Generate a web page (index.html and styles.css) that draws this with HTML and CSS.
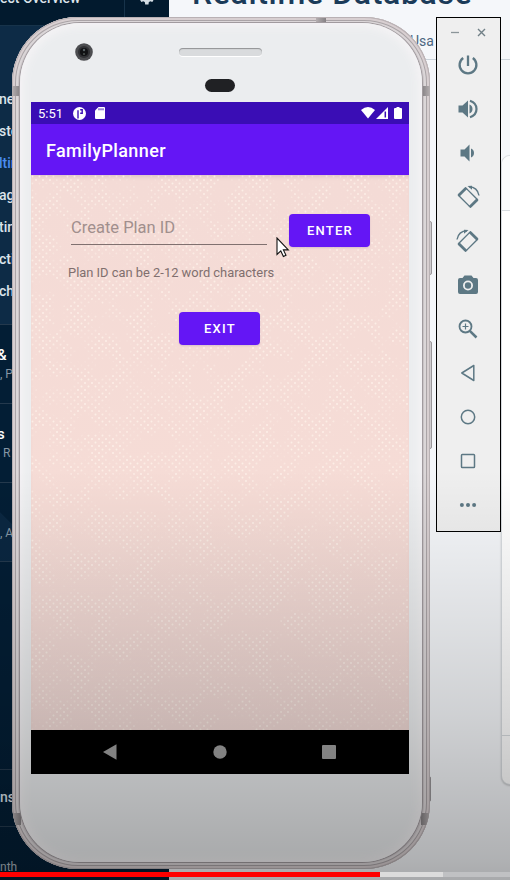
FILE: index.html
```html
<!DOCTYPE html>
<html lang="en">
<head>
<meta charset="utf-8">
<title>FamilyPlanner</title>
<link rel="stylesheet" href="styles.css">
</head>
<body>
<div class="desktop">
  <div class="console">
    <aside class="sidebar">
      <header class="side-head"><span class="side-title">ect Overview</span>
        <span class="gear"><svg width="20" height="20" viewBox="0 0 24 24"><path fill="#d5dde4" fill-rule="evenodd" d="M19.4 13a7.500 7.500 0 0 0 0-2l2.100-1.600-2-3.500-2.500 1a7 7 0 0 0-1.700-1L15 3h-4l-.4 2.900a7 7 0 0 0-1.700 1l-2.500-1-2 3.500L6.500 11a7.500 7.500 0 0 0 0 2l-2.100 1.600 2 3.500 2.500-1a7 7 0 0 0 1.700 1L11 21h4l.4-2.900a7 7 0 0 0 1.700-1l2.500 1 2-3.500zM13 15.500a3.500 3.500 0 1 1 0-7 3.500 3.500 0 0 1 0 7z"/></svg></span>
      </header>
      <nav class="side-nav">
        <span>ne</span><span>ste</span><span class="current">ltin</span><span>ag</span><span>tin</span><span>cti</span><span>chi</span>
      </nav>
      <section class="side-group"><b>&amp;</b><small>, P</small></section>
      <section class="side-group"><b>s</b><small>&nbsp;R</small></section>
      <section class="side-group last"><small>, A</small></section>
      <div class="side-space"></div>
      <section class="side-ext">ns</section>
      <section class="side-plan">nth</section>
    </aside>
    <main class="content">
      <h1>Realtime Database</h1>
      <div class="tabs">Usa</div>
      <div class="card"><div class="card-head"></div><div class="card-body"></div><div class="card-foot"></div></div>
    </main>
  </div>

  <div class="phone">
    <i class="key power"></i><i class="key volume"></i><i class="key lower"></i>
    <div class="ring">
      <i class="band b1"></i><i class="band b2"></i><i class="band b3"></i><i class="band b4"></i><i class="band b5"></i>
      <div class="face">
      <div class="forehead">
        <svg class="camera" width="18" height="18" viewBox="0 0 18 18"><circle cx="9" cy="9" r="8.800" fill="#4c4d50"/><circle cx="9" cy="9" r="6" fill="#303134"/><circle cx="9" cy="9" r="4" fill="#111214"/><circle cx="9" cy="7" r="1.200" fill="#586266"/><circle cx="9" cy="11" r="1" fill="#4c5550"/></svg>
        <div class="middle"><div class="speaker"></div><div class="sensor"></div></div>
      </div>
      <div class="screen">
        <div class="status">
          <span class="clock">5:51</span>
          <svg width="13" height="13" viewBox="0 0 13 13"><circle cx="6.500" cy="6.500" r="6.500" fill="#fff"/><path d="M5 11.500V3.300M7.200 2.800h2v3.400H7.200" fill="none" stroke="#3a0db5" stroke-width="1.400"/></svg>
          <svg class="sd" width="10" height="12" viewBox="0 0 10 12"><path fill="#fff" d="M3.500 0H9q1 0 1 1v10q0 1-1 1H1q-1 0-1-1V3.500z"/><path stroke="#3a0db5" d="M4 1.300v2M6 1.300v2M8 1.300v2"/></svg>
          <span class="grow"></span>
          <svg width="14" height="12" viewBox="0 0 14 12"><path fill="#fff" d="M0 3Q7-2.800 14 3L7 11.500z"/></svg>
          <svg class="signal" width="12" height="12" viewBox="0 0 12 12"><path fill="#fff" d="M0 12L12 0v12z"/><path d="M9.300 4.500v6" stroke="#3a0db5" stroke-width="1.500"/></svg>
          <svg class="battery" width="8" height="12" viewBox="0 0 8 12"><path fill="#fff" d="M2.500 0h3v1H7q1 0 1 1v9q0 1-1 1H1q-1 0-1-1V2q0-1 1-1h1.500z"/></svg>
        </div>
        <div class="appbar">FamilyPlanner</div>
        <div class="app">
          <svg class="texture" width="378" height="555">
            <defs>
              <pattern id="dots" width="7" height="7" patternUnits="userSpaceOnUse"><circle cx="1.500" cy="1.500" r="1" fill="#fff5ec"/><circle cx="5" cy="5" r="1" fill="#fff5ec"/></pattern>
              <filter id="patches" x="0" y="0" width="100%" height="100%"><feTurbulence type="fractalNoise" baseFrequency=".05" numOctaves="4" seed="7"/><feColorMatrix values="0 0 0 0 1  0 0 0 0 1  0 0 0 0 1  5 0 0 0 -2"/></filter>
              <mask id="patch"><rect width="378" height="555" filter="url(#patches)"/></mask>
            </defs>
            <rect width="378" height="555" fill="url(#dots)" mask="url(#patch)" opacity=".75"/>
          </svg>
          <div class="form">
            <div class="entry"><div class="field">Create Plan ID</div><div class="button">ENTER</div></div>
            <div class="hint">Plan ID can be 2-12 word characters</div>
            <div class="button exit">EXIT</div>
          </div>
        </div>
        <div class="softkeys">
          <svg width="14" height="16" viewBox="0 0 14 16"><path fill="#a0a0a0" d="M0 8L13.500.3v15.400z"/></svg>
          <svg width="14" height="14" viewBox="0 0 14 14"><circle cx="7" cy="7" r="6.700" fill="#a0a0a0"/></svg>
          <svg width="14" height="14" viewBox="0 0 14 14"><rect width="14" height="14" rx="1" fill="#a0a0a0"/></svg>
        </div>
      </div>
    </div></div>
  </div>

  <div class="emulator">
    <div class="winctl"><svg width="9" height="9"><path d="M1 4.500h8" stroke="#8b9599" stroke-width="1.300"/></svg><svg width="9" height="9"><path d="M1 1l7 7M8 1L1 8" stroke="#718087" stroke-width="1.400"/></svg></div>
    <div class="tools">
      <svg viewBox="0 0 24 24"><path d="M12 2.500V13M7.200 5A8.400 8.400 0 1 0 16.800 5" fill="none" stroke="#5d7884" stroke-width="2.300"/></svg>
      <svg viewBox="0 0 24 24"><path fill="#5d7884" d="M2.500 8.500h4l5.500-5v17l-5.500-5h-4zM13.500 7.500q3 1.400 3 4.500t-3 4.500z"/><path d="M14 3.800Q20.500 6 20.500 12T14 20.200" fill="none" stroke="#5d7884" stroke-width="2.200"/></svg>
      <svg viewBox="0 0 24 24"><path fill="#5d7884" d="M4.500 8.500h4l5-5v17l-5-5h-4zM15 7.500q3 1.400 3 4.500t-3 4.500z"/></svg>
      <svg viewBox="0 0 24 24"><g transform="rotate(-45 12 12.500)" fill="none" stroke="#5d7884"><rect x="6.800" y="3.800" width="10.400" height="17.400" rx="1" stroke-width="1.400"/><path d="M6.300 4.600h11.400M6.300 20.400h11.400" stroke-width="2.600"/></g><path d="M13 1.700q8.500.3 10 8.800" fill="none" stroke="#5d7884" stroke-width="1.400"/><path fill="#5d7884" d="M11.500 1l4.500-.3v4z"/></svg>
      <svg viewBox="0 0 24 24"><g transform="rotate(45 12 12.500)" fill="none" stroke="#5d7884"><rect x="6.800" y="3.800" width="10.400" height="17.400" rx="1" stroke-width="1.400"/><path d="M6.300 4.600h11.400M6.300 20.400h11.400" stroke-width="2.600"/></g><path d="M11 1.700q-8.500.3-10 8.800" fill="none" stroke="#5d7884" stroke-width="1.400"/><path fill="#5d7884" d="M12.500 1L8 .7v4z"/></svg>
      <svg viewBox="0 0 24 24"><path fill="#5d7884" fill-rule="evenodd" d="M8.500 2.500h7L17.500 5H20q2 0 2 2v12q0 2-2 2H4q-2 0-2-2V7q0-2 2-2h2.500zM12 7.500a5 5 0 1 0 0 10 5 5 0 0 0 0-10zM12 9.300a3.200 3.200 0 1 1 0 6.400 3.200 3.200 0 0 1 0-6.400z"/></svg>
      <svg viewBox="0 0 24 24"><g fill="none" stroke="#5d7884"><circle cx="9.500" cy="9.500" r="6" stroke-width="1.800"/><path d="M13.800 13.800l6.700 6.700" stroke-width="2.500"/><path d="M6.500 9.500h6M9.500 6.500v6" stroke-width="1.200"/></g></svg>
      <svg viewBox="0 0 24 24"><path d="M5.800 12l12-7.500v15z" fill="none" stroke="#5d7884" stroke-width="1.500" stroke-linejoin="round"/></svg>
      <svg viewBox="0 0 24 24"><circle cx="12" cy="12" r="6.700" fill="none" stroke="#5d7884" stroke-width="1.500"/></svg>
      <svg viewBox="0 0 24 24"><rect x="5.500" y="5.500" width="13" height="13" rx=".8" fill="none" stroke="#5d7884" stroke-width="1.500"/></svg>
      <svg viewBox="0 0 24 24"><g fill="#5d7884"><circle cx="5.900" cy="12" r="2"/><circle cx="12" cy="12" r="2"/><circle cx="18.100" cy="12" r="2"/></g></svg>
    </div>
  </div>

  <svg class="cursor" width="14" height="22" viewBox="0 0 14 22"><path d="M1 1v16.500l3.800-3.600 2.600 5.600 2.600-1.200-2.600-5.400h4.900z" fill="#fff" stroke="#111" stroke-width="1.100"/></svg>
  <div class="shade"></div>
  <div class="cover">
    <div class="playbar"><i class="played"></i><i class="loaded"></i></div>
  </div>
</div>
</body>
</html>
```

FILE: styles.css
```css
* { box-sizing: border-box; }
body { margin: 0; font-family: Roboto, "Liberation Sans", sans-serif; }
svg { display: block; flex: none; }
.desktop { position: relative; width: 510px; height: 880px; overflow: hidden; background: #f5f7fa; }

.console { display: flex; height: 880px; }
.sidebar { width: 169px; flex: none; display: flex; flex-direction: column; background: #031e35; color: #dbe3ea; font-size: 14px; font-weight: 500; overflow: hidden; }
.side-head { height: 26px; flex: none; display: flex; background: #021a2e; border-bottom: 1px solid #17334a; }
.side-title { width: 125px; height: 34px; margin-top: -10px; line-height: 16px; white-space: nowrap; font-size: 14px; border-right: 1px solid #17334a; }
.gear { margin: -13px 0 0 11px; }
.side-nav { height: 298px; flex: none; padding-top: 57px; display: flex; flex-direction: column; background: #0d2b46; }
.side-nav span { height: 32px; line-height: 32px; margin-left: -1px; }
.side-nav .current { color: #4b8df0; }
.side-group { height: 79px; flex: none; padding-top: 20px; border-top: 1px solid #24394d; display: flex; flex-direction: column; }
.side-group b { font-size: 15px; line-height: 20px; color: #fff; font-weight: 500; margin-left: -3px; }
.side-group b + small { margin-left: 0; }
.side-group small { font-size: 12px; line-height: 19px; color: #8797a5; font-weight: 400; }
.side-group.last { padding-top: 41px; border-bottom: 1px solid #24394d; height: 80px; background: linear-gradient(45deg, #0a2741 0 34px, #031e35 35px); }
.side-space { flex: 1; }
.side-ext { height: 57px; flex: none; line-height: 55px; border-top: 1px solid #24394d; }
.side-plan { height: 54px; flex: none; padding-top: 32px; line-height: 16px; border-top: 1px solid #24394d; font-weight: 400; font-size: 12px; color: #aab5bf; }

.content { flex: 1; display: flex; flex-direction: column; min-width: 0; }
h1 { margin: -26px 0 0 23px; font-size: 32px; line-height: 38px; font-weight: 500; color: #1b3b59; white-space: nowrap; height: 40px; flex: none; letter-spacing: .65px; }
.tabs { height: 46px; flex: none; padding: 18px 0 0 241px; line-height: 18px; font-size: 14px; color: #4c6680; border-bottom: 1px solid #cbd3da; }
.card { margin: 95px -20px 0 332px; height: 630px; flex: none; border: 1px solid #d8dce0; border-radius: 9px; background: #fff; display: flex; flex-direction: column; box-shadow: 0 1px 2px #0003; }
.card-head { height: 55px; background: #fafbfc; border-bottom: 1px solid #d8dce0; border-radius: 9px 0 0; }
.card-body { flex: 1; }
.card-foot { height: 49px; border-top: 1px solid #d8dce0; }

.phone { position: absolute; left: 12px; top: 17px; width: 418px; height: 852px; }
.ring { position: relative; overflow: hidden; height: 852px; padding: 6px 8px 7px; border-radius: 66px; background: #c9c3c6; box-shadow: inset 0 0 0 1px #b9b1b4, inset 0 0 0 3px #d8cfd1, inset 0 0 0 4px #aaa4a7, inset 0 0 0 6px #dbd6d8; }
.face { position: relative; height: 839px; padding: 0 11px; border-radius: 60px; background: #ebedef; box-shadow: 0 0 0 1px #a19b9f, inset 0 0 9px 4px #f5f3f5; }
.forehead { height: 79px; display: flex; }
.camera { margin: 20px 0 0 44px; }
.middle { margin: 25px 0 0 86px; display: flex; flex-direction: column; align-items: center; gap: 23px; }
.speaker { width: 83px; height: 8px; border-radius: 4px; background: #d9dbdd; box-shadow: inset 0 1px 1px #8f9193, 0 1px #fff; }
.sensor { width: 30px; height: 13px; border-radius: 7px; background: #202124; margin-right: 1px; }
.screen { width: 378px; height: 672px; display: flex; flex-direction: column; background: #000; }
.status { height: 22px; flex: none; display: flex; align-items: center; padding: 0 7px; background: #3a0db5; color: #fff; }
.clock { width: 35px; font-size: 13px; }
.sd { margin-left: 9px; }
.grow { flex: 1; }
.signal { margin-left: 1px; }
.battery { margin-left: 6px; }
.appbar { height: 51px; flex: none; padding-left: 15px; line-height: 53px; font-size: 18px; font-weight: 500; letter-spacing: .4px; color: #fff; background: #6416f5; }
.app { position: relative; height: 555px; flex: none; background: linear-gradient(#f4dbd6, #f6dcd6 60%, #f1dad6); box-shadow: inset 0 4px 4px -3px #b79fb080; }
.texture { position: absolute; left: 0; top: 0; }
.form { position: relative; height: 555px; padding: 39px 37px; display: flex; flex-direction: column; }
.entry { display: flex; justify-content: space-between; padding: 0 2px 0 3px; }
.field { width: 196px; height: 31px; line-height: 27px; font-size: 16.5px; color: #a18f8d; border-bottom: 1px solid #80706f; }
.button { width: 81px; height: 33px; border-radius: 4px; background: #6416f5; color: #fff; font-size: 13px; font-weight: 500; letter-spacing: 1.25px; line-height: 34px; text-align: center; text-indent: 1px; box-shadow: 0 1px 2px #6b4b8f33; }
.hint { margin-top: 17px; height: 18px; line-height: 18px; font-size: 12.9px; color: #806f6e; white-space: nowrap; }
.exit { margin: 30px 0 0 111px; }
.softkeys { height: 44px; display: flex; align-items: center; justify-content: space-between; padding: 0 73px 0 72px; }

.key { position: absolute; left: 416px; width: 4px; border: 1px solid #999699; border-radius: 0 2px 2px 0; background: #cfcdd0; }
.power { top: 204px; height: 54px; }
.volume { top: 324px; height: 108px; }
.lower { top: 759px; height: 26px; width: 3px; }
.band { position: absolute; width: 8px; height: 10px; background: linear-gradient(90deg, #b5afb1, #858184); }
.b1 { left: 0; top: 69px; }
.b2 { left: 410px; top: 69px; transform: scaleX(-1); }
.b3 { left: 304px; top: 1px; width: 10px; height: 5px; }
.b4 { left: 1px; top: 796px; height: 12px; }
.b5 { left: 409px; top: 796px; height: 12px; transform: scaleX(-1); }

.emulator { position: absolute; left: 436px; top: 17px; width: 65px; height: 515px; border: 1px solid #000; background: #efefef; }
.winctl { display: flex; justify-content: space-between; padding: 10px 14px 0 13px; height: 35px; }
.tools { display: flex; flex-direction: column; align-items: center; gap: 20px; padding-right: 1px; }
.tools svg { width: 24px; height: 24px; }
.cursor { position: absolute; left: 276px; top: 237px; }
.shade { position: absolute; left: 0; right: 0; top: 470px; bottom: 0; background: linear-gradient(transparent, #0000001a 40%, #00000028 60%, #00000048 95%, #00000050); }
.cover { position: absolute; left: 0; right: 0; bottom: 3px; }
.playbar { height: 5px; display: flex; background: #c0c1c3; }
.played { width: 380px; background: #f00; }
.loaded { width: 63px; background: #dcdcdc; }
```
